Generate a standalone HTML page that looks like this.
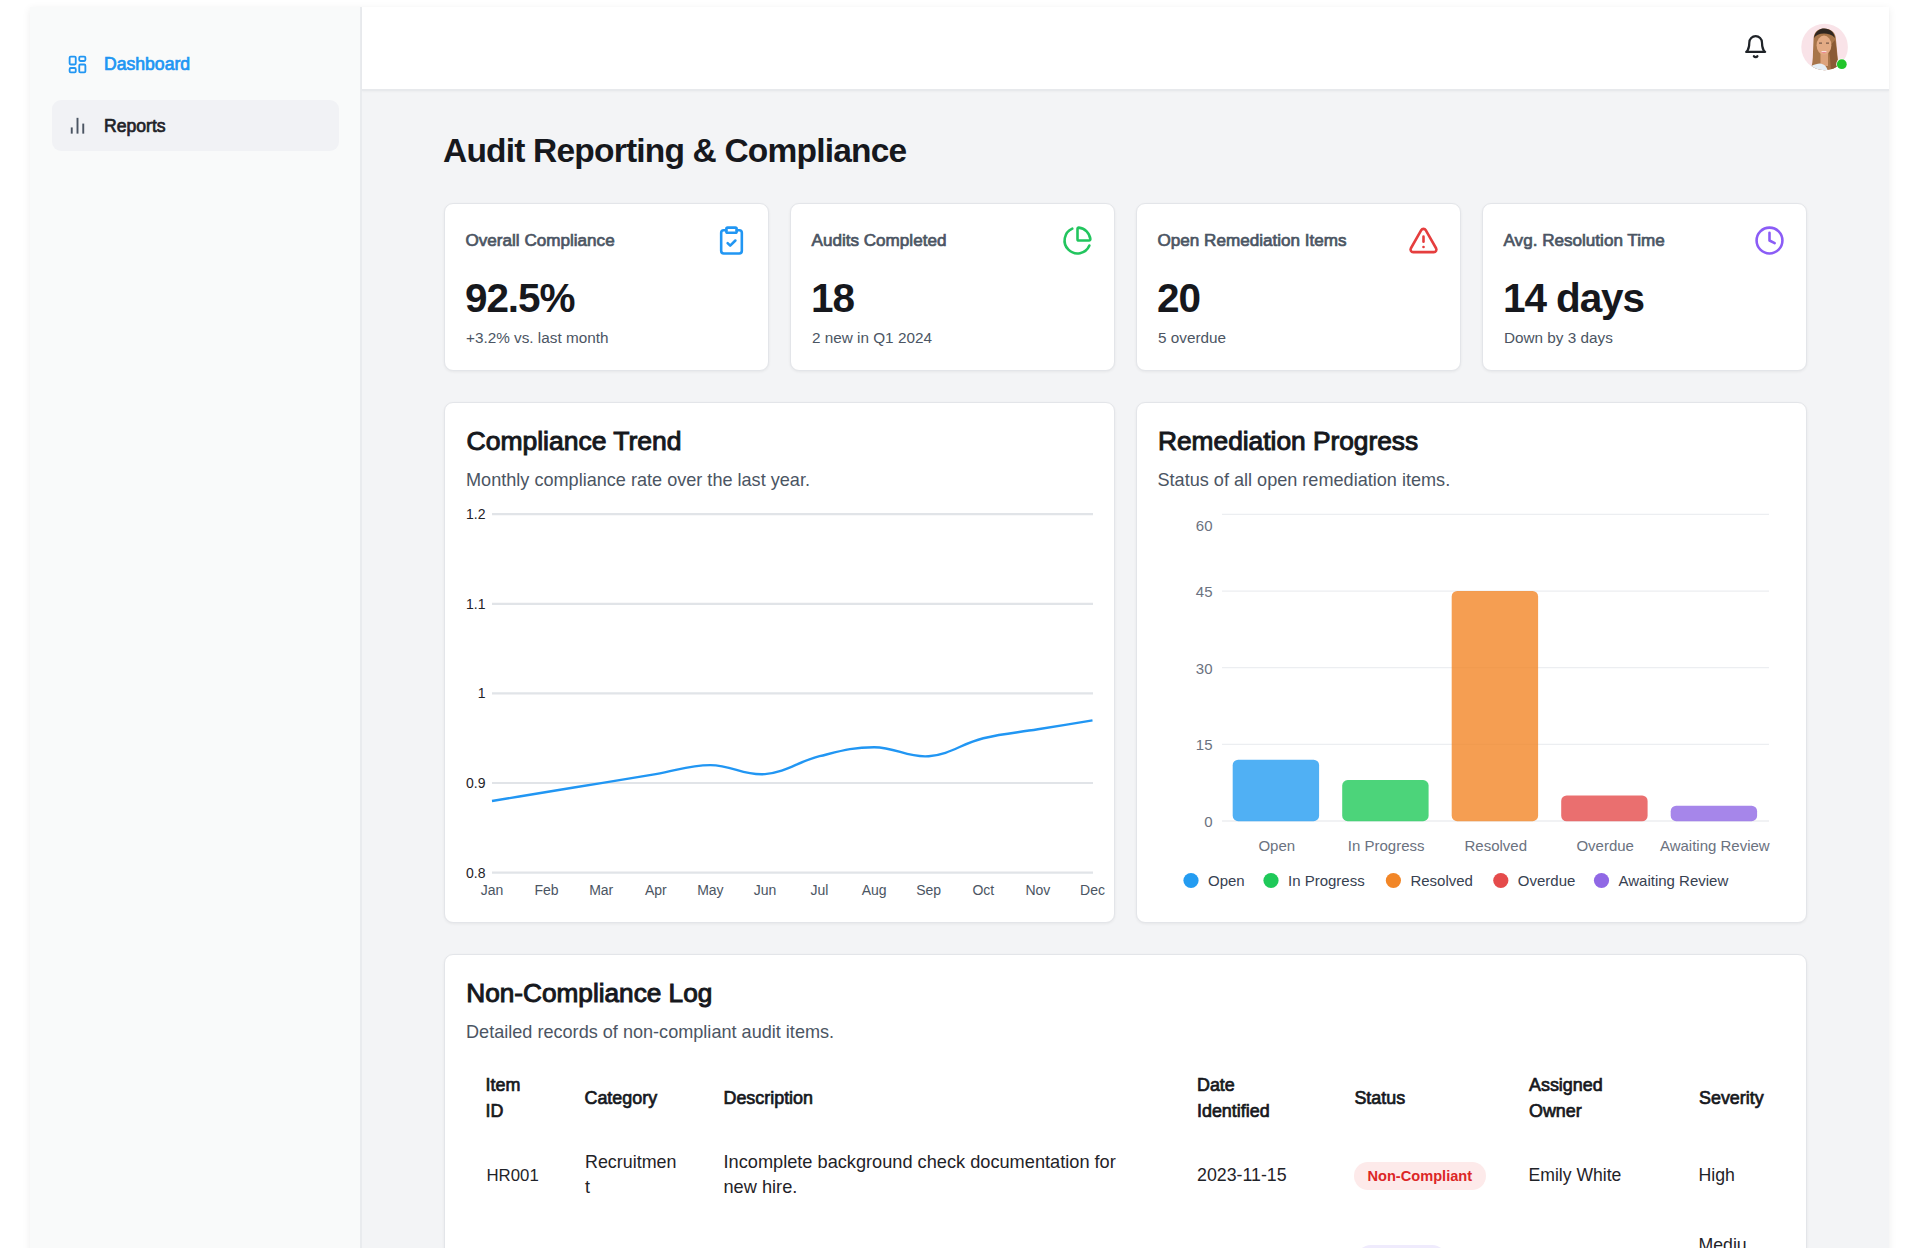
<!DOCTYPE html>
<html><head><meta charset="utf-8"><title>Audit Reporting &amp; Compliance</title>
<style>
*{box-sizing:border-box;margin:0;padding:0}
html,body{width:1920px;height:1248px;overflow:hidden;background:#fff;font-family:"Liberation Sans",sans-serif;color:#111827}
.abs{position:absolute}
.t{position:absolute;white-space:nowrap;line-height:1}
#frame{position:absolute;left:30px;top:7px;width:1859px;height:1260px;background:#f3f4f6;box-shadow:0 2px 8px rgba(0,0,0,.075)}
#side{position:absolute;left:30px;top:7px;width:332px;height:1260px;background:#f9fafa;border-right:2px solid #e9ebee}
#hdr{position:absolute;left:362px;top:7px;width:1527px;height:84px;background:#fff;border-bottom:2px solid #e7e9ec;box-shadow:0 1px 2px rgba(0,0,0,.03)}
.card{position:absolute;background:#fff;border:1px solid #e3e5e9;border-radius:9px;box-shadow:0 1px 3px rgba(0,0,0,.06)}
svg{position:absolute;overflow:visible}
</style></head>
<body>
<div id="frame"></div>
<div id="side"></div>
<div class="abs" style="left:52px;top:100px;width:287px;height:51px;background:#f1f2f5;border-radius:9px"></div>
<svg style="left:66.5px;top:54px" width="21" height="21" viewBox="0 0 24 24" fill="none" stroke="#2196f3" stroke-width="2.1" stroke-linecap="round" stroke-linejoin="round"><rect width="7" height="9" x="3" y="3" rx="1.3"/><rect width="7" height="5" x="14" y="3" rx="1.3"/><rect width="7" height="9" x="14" y="12" rx="1.3"/><rect width="7" height="5" x="3" y="16" rx="1.3"/></svg>
<div class="t" style="left:104px;top:56px;font-size:17.6px;color:#2196f3;-webkit-text-stroke:0.7px #2196f3;">Dashboard</div>
<svg style="left:66px;top:114px" width="23" height="23" viewBox="0 0 24 24" fill="none" stroke="#4b5563" stroke-width="2" stroke-linecap="butt"><line x1="18" x2="18" y1="20.5" y2="10"/><line x1="12" x2="12" y1="20.5" y2="4"/><line x1="6" x2="6" y1="20.5" y2="14"/></svg>
<div class="t" style="left:104px;top:118px;font-size:17.6px;color:#1f2328;-webkit-text-stroke:0.7px #1f2328;">Reports</div>
<div id="hdr"></div>
<svg style="left:1742.6px;top:34.2px" width="25.3" height="25.3" viewBox="0 0 24 24" fill="none" stroke="#1f2328" stroke-width="2.1" stroke-linecap="round" stroke-linejoin="round"><path d="M6 8a6 6 0 0 1 12 0c0 7 3 9 3 9H3s3-2 3-9"/><path d="M10.3 21a1.94 1.94 0 0 0 3.4 0"/></svg>
<svg style="left:1801px;top:24px" width="47" height="47" viewBox="0 0 47 47">
<defs><clipPath id="avc"><circle cx="23.6" cy="23" r="23.3"/></clipPath></defs>
<circle cx="23.6" cy="23" r="23.3" fill="#f9e3e8"/>
<g clip-path="url(#avc)">
<path d="M12.5 16 C12.5 8 17 4.5 23 4.5 C30 4.5 35 8.5 35 16 L36.5 32 C37.5 40 37 45 35 48 L9 48 C11 43 12 36 12 28Z" fill="#a8754a"/>
<path d="M19.5 28 h7.5 v14 h-7.5z" fill="#dda37c"/>
<path d="M5 48 C8 42 13 40 19 39.5 C23 40 26 42 27 48Z" fill="#e6eef5"/>
<path d="M27 24 C29 30 29.5 38 30 48 L35 48 C37 44 37 38 36 31 C35.5 26 35 20 34 16Z" fill="#8a5a35"/>
<path d="M13 14 C14 7 19 4.5 23 4.5 C29 4.5 33 8 34 14 C31 10.5 27 9.5 23 9.5 C18 9.5 15 11 13 14Z" fill="#2f2620"/>
<ellipse cx="23" cy="21.2" rx="7.4" ry="9.6" fill="#e3ab85"/>
<path d="M18 19.2 h3 M25 19.2 h3" stroke="#7a5a48" stroke-width="1.3"/>
<path d="M19.8 27.5 Q23 31 26.2 27.5 Z" fill="#e9707e"/>
<path d="M20.5 27.7 h5" stroke="#fff" stroke-width="0.9"/>
</g>
<circle cx="40.8" cy="40.2" r="5.6" fill="#fff"/>
<circle cx="40.8" cy="40.2" r="4.9" fill="#22c52a"/>
</svg>
<div class="t" style="left:443px;top:134px;font-size:33.5px;color:#16181d;font-weight:bold;letter-spacing:-0.8px;">Audit Reporting &amp; Compliance</div>
<div class="card" style="left:444px;top:203px;width:325px;height:168px"></div>
<div class="card" style="left:790px;top:203px;width:325px;height:168px"></div>
<div class="card" style="left:1136px;top:203px;width:325px;height:168px"></div>
<div class="card" style="left:1482px;top:203px;width:325px;height:168px"></div>
<div class="t" style="left:465.5px;top:232px;font-size:17.1px;color:#4b5563;-webkit-text-stroke:0.7px #4b5563;">Overall Compliance</div>
<div class="t" style="left:465px;top:278px;font-size:40.5px;color:#16181d;font-weight:bold;letter-spacing:-1.1px;">92.5%</div>
<div class="t" style="left:466px;top:330px;font-size:15.3px;color:#4b5563;">+3.2% vs. last month</div>
<div class="t" style="left:811.5px;top:232px;font-size:17.1px;color:#4b5563;-webkit-text-stroke:0.7px #4b5563;">Audits Completed</div>
<div class="t" style="left:811px;top:278px;font-size:40.5px;color:#16181d;font-weight:bold;letter-spacing:-1.1px;">18</div>
<div class="t" style="left:812px;top:330px;font-size:15.3px;color:#4b5563;">2 new in Q1 2024</div>
<div class="t" style="left:1157.5px;top:232px;font-size:17.1px;color:#4b5563;-webkit-text-stroke:0.7px #4b5563;">Open Remediation Items</div>
<div class="t" style="left:1157px;top:278px;font-size:40.5px;color:#16181d;font-weight:bold;letter-spacing:-1.1px;">20</div>
<div class="t" style="left:1158px;top:330px;font-size:15.3px;color:#4b5563;">5 overdue</div>
<div class="t" style="left:1503.5px;top:232px;font-size:17.1px;color:#4b5563;-webkit-text-stroke:0.7px #4b5563;">Avg. Resolution Time</div>
<div class="t" style="left:1503px;top:278px;font-size:40.5px;color:#16181d;font-weight:bold;letter-spacing:-1.1px;">14 days</div>
<div class="t" style="left:1504px;top:330px;font-size:15.3px;color:#4b5563;">Down by 3 days</div>
<svg style="left:716px;top:225.3px" width="31" height="31" viewBox="0 0 24 24" fill="none" stroke="#2196f3" stroke-width="2" stroke-linecap="round" stroke-linejoin="round"><rect width="8" height="4" x="8" y="2" rx="1" ry="1"/><path d="M16 4h2a2 2 0 0 1 2 2v14a2 2 0 0 1-2 2H6a2 2 0 0 1-2-2V6a2 2 0 0 1 2-2h2"/><path d="m9 14 2 2 4-4"/></svg>
<svg style="left:1062px;top:225.3px" width="31" height="31" viewBox="0 0 24 24" fill="none" stroke="#22c55e" stroke-width="2" stroke-linecap="round" stroke-linejoin="round"><path d="M21 12c.552 0 1.005-.449.95-.998a10 10 0 0 0-8.953-8.951c-.55-.055-.998.398-.998.95v8a1 1 0 0 0 1 1z"/><path d="M21.21 15.89A10 10 0 1 1 8 2.83"/></svg>
<svg style="left:1408px;top:225.3px" width="31" height="31" viewBox="0 0 24 24" fill="none" stroke="#e53e3e" stroke-width="2" stroke-linecap="round" stroke-linejoin="round"><path d="m21.73 18-8-14a2 2 0 0 0-3.48 0l-8 14A2 2 0 0 0 4 21h16a2 2 0 0 0 1.73-3"/><path d="M12 9v4"/><path d="M12 17h.01"/></svg>
<svg style="left:1754px;top:225.3px" width="31" height="31" viewBox="0 0 24 24" fill="none" stroke="#8b5cf6" stroke-width="2" stroke-linecap="round" stroke-linejoin="round"><circle cx="12" cy="12" r="10"/><polyline points="12 6 12 12 16 14"/></svg>
<div class="card" style="left:444px;top:402px;width:671px;height:521px"></div>
<div class="card" style="left:1136px;top:402px;width:671px;height:521px"></div>
<div class="t" style="left:466.5px;top:428px;font-size:26.5px;color:#16181d;-webkit-text-stroke:1.0px #16181d;">Compliance Trend</div>
<div class="t" style="left:466px;top:471px;font-size:18.1px;color:#4b5563;">Monthly compliance rate over the last year.</div>
<div class="t" style="left:1158px;top:428px;font-size:26.3px;color:#16181d;-webkit-text-stroke:1.0px #16181d;">Remediation Progress</div>
<div class="t" style="left:1157.5px;top:471px;font-size:18.1px;color:#4b5563;">Status of all open remediation items.</div>
<svg style="left:0;top:0" width="1920" height="1248" viewBox="0 0 1920 1248" font-family="Liberation Sans, sans-serif">
<line x1="492" x2="1093" y1="514.2" y2="514.2" stroke="#e1e4e8" stroke-width="2.2"/>
<text x="485.5" y="519.2" text-anchor="end" font-size="14" fill="#1f2328">1.2</text>
<line x1="492" x2="1093" y1="603.8" y2="603.8" stroke="#e1e4e8" stroke-width="2.2"/>
<text x="485.5" y="608.8" text-anchor="end" font-size="14" fill="#1f2328">1.1</text>
<line x1="492" x2="1093" y1="693.3" y2="693.3" stroke="#e1e4e8" stroke-width="2.2"/>
<text x="485.5" y="698.3" text-anchor="end" font-size="14" fill="#1f2328">1</text>
<line x1="492" x2="1093" y1="783.0" y2="783.0" stroke="#e1e4e8" stroke-width="2.2"/>
<text x="485.5" y="788.0" text-anchor="end" font-size="14" fill="#1f2328">0.9</text>
<line x1="492" x2="1093" y1="872.7" y2="872.7" stroke="#e1e4e8" stroke-width="2.2"/>
<text x="485.5" y="877.7" text-anchor="end" font-size="14" fill="#1f2328">0.8</text>
<text x="492.0" y="894.8" text-anchor="middle" font-size="14" fill="#4b5563">Jan</text>
<text x="546.6" y="894.8" text-anchor="middle" font-size="14" fill="#4b5563">Feb</text>
<text x="601.2" y="894.8" text-anchor="middle" font-size="14" fill="#4b5563">Mar</text>
<text x="655.8" y="894.8" text-anchor="middle" font-size="14" fill="#4b5563">Apr</text>
<text x="710.4" y="894.8" text-anchor="middle" font-size="14" fill="#4b5563">May</text>
<text x="765.0" y="894.8" text-anchor="middle" font-size="14" fill="#4b5563">Jun</text>
<text x="819.5" y="894.8" text-anchor="middle" font-size="14" fill="#4b5563">Jul</text>
<text x="874.1" y="894.8" text-anchor="middle" font-size="14" fill="#4b5563">Aug</text>
<text x="928.7" y="894.8" text-anchor="middle" font-size="14" fill="#4b5563">Sep</text>
<text x="983.3" y="894.8" text-anchor="middle" font-size="14" fill="#4b5563">Oct</text>
<text x="1037.9" y="894.8" text-anchor="middle" font-size="14" fill="#4b5563">Nov</text>
<text x="1092.5" y="894.8" text-anchor="middle" font-size="14" fill="#4b5563">Dec</text>
<path d="M492.00,801.00C513.84,797.42,524.75,795.62,546.59,792.04C568.43,788.45,579.35,786.66,601.18,783.08C623.02,779.49,633.94,777.70,655.77,774.11C677.61,770.53,688.53,765.15,710.36,765.15C732.20,765.15,743.53,775.87,764.95,774.11C787.20,772.29,797.30,761.67,819.55,756.19C840.97,750.91,852.30,747.23,874.14,747.23C895.97,747.23,907.30,757.95,928.73,756.19C950.98,754.36,961.07,743.74,983.32,738.26C1004.74,732.99,1016.07,732.89,1037.91,729.30C1059.75,725.72,1070.66,723.92,1092.50,720.34" fill="none" stroke="#2196f3" stroke-width="2.4"/>
<line x1="1222" x2="1769" y1="514.4" y2="514.4" stroke="#eceef1" stroke-width="1.3"/>
<text x="1212.5" y="530.8" text-anchor="end" font-size="15" fill="#6b7280">60</text>
<line x1="1222" x2="1769" y1="591.1" y2="591.1" stroke="#eceef1" stroke-width="1.3"/>
<text x="1212.5" y="596.7" text-anchor="end" font-size="15" fill="#6b7280">45</text>
<line x1="1222" x2="1769" y1="667.7" y2="667.7" stroke="#eceef1" stroke-width="1.3"/>
<text x="1212.5" y="673.5" text-anchor="end" font-size="15" fill="#6b7280">30</text>
<line x1="1222" x2="1769" y1="744.3" y2="744.3" stroke="#eceef1" stroke-width="1.3"/>
<text x="1212.5" y="750.3" text-anchor="end" font-size="15" fill="#6b7280">15</text>
<line x1="1222" x2="1769" y1="821" y2="821" stroke="#eceef1" stroke-width="1.3"/>
<text x="1212.5" y="826.5" text-anchor="end" font-size="15" fill="#6b7280">0</text>
<rect x="1232.7" y="759.7" width="86.4" height="61.5" rx="5.5" fill="#249cf1" fill-opacity="0.8"/>
<text x="1276.8" y="850.8" text-anchor="middle" font-size="15" fill="#6b7280">Open</text>
<rect x="1342.2" y="780.1" width="86.4" height="41.1" rx="5.5" fill="#1fc959" fill-opacity="0.8"/>
<text x="1386.2" y="850.8" text-anchor="middle" font-size="15" fill="#6b7280">In Progress</text>
<rect x="1451.7" y="591.0" width="86.4" height="230.2" rx="5.5" fill="#f28627" fill-opacity="0.8"/>
<text x="1495.8" y="850.8" text-anchor="middle" font-size="15" fill="#6b7280">Resolved</text>
<rect x="1561.2" y="795.5" width="86.4" height="25.8" rx="5.5" fill="#e54b4b" fill-opacity="0.8"/>
<text x="1605.2" y="850.8" text-anchor="middle" font-size="15" fill="#6b7280">Overdue</text>
<rect x="1670.7" y="805.7" width="86.4" height="15.5" rx="5.5" fill="#9068e5" fill-opacity="0.8"/>
<text x="1714.8" y="850.8" text-anchor="middle" font-size="15" fill="#6b7280">Awaiting Review</text>
<circle cx="1191" cy="880.5" r="7.6" fill="#249cf1"/>
<text x="1208" y="885.5" font-size="15" fill="#374151">Open</text>
<circle cx="1271" cy="880.5" r="7.6" fill="#1fc959"/>
<text x="1288" y="885.5" font-size="15" fill="#374151">In Progress</text>
<circle cx="1393.4" cy="880.5" r="7.6" fill="#f28627"/>
<text x="1410.4" y="885.5" font-size="15" fill="#374151">Resolved</text>
<circle cx="1500.8" cy="880.5" r="7.6" fill="#e54b4b"/>
<text x="1517.8" y="885.5" font-size="15" fill="#374151">Overdue</text>
<circle cx="1601.5" cy="880.5" r="7.6" fill="#9068e5"/>
<text x="1618.5" y="885.5" font-size="15" fill="#374151">Awaiting Review</text>
</svg>
<div class="card" style="left:444px;top:954px;width:1363px;height:400px"></div>
<div class="t" style="left:466.3px;top:980px;font-size:26.2px;color:#16181d;-webkit-text-stroke:1.0px #16181d;">Non-Compliance Log</div>
<div class="t" style="left:466px;top:1023px;font-size:18.1px;color:#4b5563;">Detailed records of non-compliant audit items.</div>
<div class="t" style="left:485.5px;top:1077px;font-size:17.9px;color:#16181d;-webkit-text-stroke:0.7px #16181d;">Item</div>
<div class="t" style="left:485.5px;top:1103px;font-size:17.9px;color:#16181d;-webkit-text-stroke:0.7px #16181d;">ID</div>
<div class="t" style="left:584.5px;top:1090px;font-size:17.9px;color:#16181d;-webkit-text-stroke:0.7px #16181d;">Category</div>
<div class="t" style="left:723.5px;top:1090px;font-size:17.9px;color:#16181d;-webkit-text-stroke:0.7px #16181d;">Description</div>
<div class="t" style="left:1197px;top:1077px;font-size:17.9px;color:#16181d;-webkit-text-stroke:0.7px #16181d;">Date</div>
<div class="t" style="left:1197px;top:1103px;font-size:17.9px;color:#16181d;-webkit-text-stroke:0.7px #16181d;">Identified</div>
<div class="t" style="left:1354.4px;top:1090px;font-size:17.9px;color:#16181d;-webkit-text-stroke:0.7px #16181d;">Status</div>
<div class="t" style="left:1529px;top:1077px;font-size:17.9px;color:#16181d;-webkit-text-stroke:0.7px #16181d;">Assigned</div>
<div class="t" style="left:1529px;top:1103px;font-size:17.9px;color:#16181d;-webkit-text-stroke:0.7px #16181d;">Owner</div>
<div class="t" style="left:1699px;top:1090px;font-size:17.9px;color:#16181d;-webkit-text-stroke:0.7px #16181d;">Severity</div>
<div class="t" style="left:486.5px;top:1168px;font-size:16.8px;color:#1f2328;">HR001</div>
<div class="t" style="left:585px;top:1154px;font-size:17.9px;color:#1f2328;">Recruitmen</div>
<div class="t" style="left:585px;top:1179px;font-size:17.9px;color:#1f2328;">t</div>
<div class="t" style="left:723.5px;top:1153px;font-size:18.2px;color:#1f2328;">Incomplete background check documentation for</div>
<div class="t" style="left:723.5px;top:1178px;font-size:18.2px;color:#1f2328;">new hire.</div>
<div class="t" style="left:1197px;top:1167px;font-size:17.8px;color:#1f2328;">2023-11-15</div>
<div class="abs" style="left:1354.3px;top:1162px;width:132px;height:28px;border-radius:14px;background:#fdeaea"></div>
<div class="t" style="left:1367.5px;top:1169px;font-size:14.6px;color:#dc2626;font-weight:bold;">Non-Compliant</div>
<div class="t" style="left:1528.5px;top:1167px;font-size:17.6px;color:#1f2328;">Emily White</div>
<div class="t" style="left:1698.5px;top:1167px;font-size:17.7px;color:#1f2328;">High</div>
<div class="abs" style="left:1357px;top:1244.5px;width:89px;height:28px;border-radius:14px;background:#efebfd"></div>
<div class="t" style="left:1698.5px;top:1237px;font-size:17.7px;color:#1f2328;">Mediu</div>
</body></html>
